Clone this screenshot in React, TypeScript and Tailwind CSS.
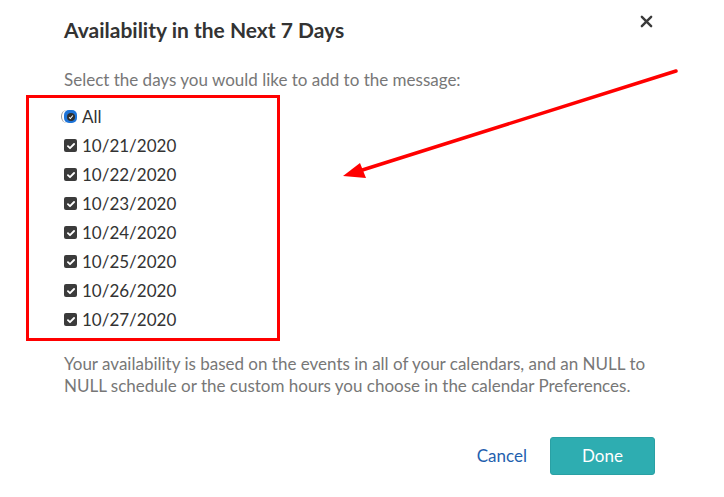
import React from "react";

const days = [
  "10/21/2020",
  "10/22/2020",
  "10/23/2020",
  "10/24/2020",
  "10/25/2020",
  "10/26/2020",
  "10/27/2020",
];

const Check = ({ color = "white" }: { color?: string }) => (
  <svg viewBox="0 0 12 12" className="w-[10px] h-[10px]">
    <path
      d="M2.3 6.2 L4.8 8.6 L9.7 3.6"
      fill="none"
      stroke={color}
      strokeWidth={2.2}
      strokeLinecap="round"
      strokeLinejoin="round"
    />
  </svg>
);

const DayRow = ({ label }: { label: string }) => (
  <label className="flex items-center h-[29px] gap-[5px]">
    <span className="w-[13px] h-[13px] rounded-[2px] bg-[#3b3b3b] flex items-center justify-center">
      <Check />
    </span>
    <span>{label}</span>
  </label>
);

export default function App() {
  return (
    <div
      className="relative w-[724px] h-[497px] bg-white overflow-hidden"
      style={{ fontFamily: "Lato, 'Open Sans', sans-serif" }}
    >
      <button className="absolute left-[639px] top-[14px] w-[14px] h-[14px] flex items-center justify-center">
        <svg viewBox="0 0 14 14" className="w-[13px] h-[13px]">
          <path
            d="M2 2 L12 12 M12 2 L2 12"
            stroke="#3a3a3a"
            strokeWidth={2.6}
            strokeLinecap="round"
          />
        </svg>
      </button>

      <div className="pl-[64px] pr-[68px] pt-[16px]">
        <h2 className="text-[21px] leading-[28px] font-bold text-[#333]">
          Availability in the Next 7 Days
        </h2>
        <p className="mt-[24px] text-[17px] leading-[24px] text-[#777]">
          Select the days you would like to add to the message:
        </p>

        <div className="mt-[10px] text-[17px] text-[#333]">
          <label className="flex items-center h-[29px] gap-[5px]">
            <span className="relative w-[13px] h-[13px]">
              <span className="absolute left-[-3px] top-[0px] w-[6px] h-[13px] rounded-l-full border-l-[1.5px] border-[#9a9a9a]" />
              <span className="absolute inset-0 rounded-[5px] bg-[#1e74d8] flex items-center justify-center">
                <span className="w-[8px] h-[8px] rounded-full bg-[#2f2f2f] flex items-center justify-center">
                  <svg viewBox="0 0 8 8" className="w-[6px] h-[6px]">
                    <path d="M1.5 4.5 L3.2 6 L6.5 2" fill="none" stroke="white" strokeWidth={1.4} />
                  </svg>
                </span>
              </span>
            </span>
            <span>All</span>
          </label>
          {days.map((d) => (
            <DayRow key={d} label={d} />
          ))}
        </div>

        <p className="mt-[19px] text-[17px] leading-[22px] text-[#777]">
          Your availability is based on the events in all of your calendars, and an NULL to NULL
          schedule or the custom hours you choose in the calendar Preferences.
        </p>

        <div className="mt-[40px] flex items-center justify-end gap-[23px] pr-[1px]">
          <button className="text-[17px] text-[#1f5fae]">Cancel</button>
          <button className="w-[105px] h-[38px] rounded-[3px] bg-[#2eadb1] text-white text-[17px] border border-[#2aa0a4]">
            Done
          </button>
        </div>
      </div>

      {/* annotation overlay */}
      <div className="absolute left-[26px] top-[95px] w-[254px] h-[246px] border-[3px] border-[#ff0000] pointer-events-none" />
      <svg className="absolute inset-0 pointer-events-none" width={724} height={497}>
        <line x1={676} y1={71} x2={356} y2={172} stroke="#ff0000" strokeWidth={3.5} strokeLinecap="round" />
        <polygon points="343,176 360,163 366,178" fill="#ff0000" />
      </svg>
    </div>
  );
}
